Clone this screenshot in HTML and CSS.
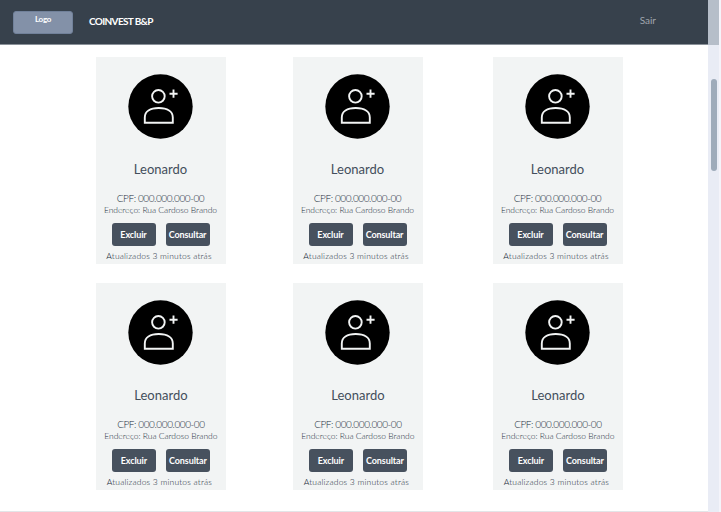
FILE: index.html
```
<!DOCTYPE html>
<html lang="pt-BR">
<head>
<meta charset="utf-8">
<title>COINVEST B&amp;P</title>
<link rel="stylesheet" href="styles.css">
</head>
<body>
<svg class="symbols" width="0" height="0" aria-hidden="true">
  <symbol id="avatar" viewBox="0 0 65 65">
    <circle cx="32.5" cy="32.5" r="32.2" fill="#000"/>
    <g fill="none" stroke="#f2f4f4" stroke-width="1.9">
      <circle cx="30.4" cy="22.3" r="6.3"/>
      <path d="M16.8 48.8V43.5C16.8 37.5 22 34 30.7 34S44.8 37.5 44.8 43.5V48.8Z"/>
      <path d="M41.5 19.7H49.6M45.5 15.6V23.8"/>
    </g>
  </symbol>
</svg>
<header class="topbar">
  <div class="logo">Logo</div>
  <div class="brand">COINVEST B&amp;P</div>
  <div class="logout">Sair</div>
</header>
<main class="content">
  <section class="row">
    <article class="card"><svg class="avatar"><use href="#avatar"/></svg><h2>Leonardo</h2><p class="cpf">CPF: 000.000.000-00</p><p class="address">Endereço: Rua Cardoso Brando</p><div class="actions"><button>Excluir</button><button>Consultar</button></div><p class="updated">Atualizados 3 minutos atrás</p></article>
    <article class="card"><svg class="avatar"><use href="#avatar"/></svg><h2>Leonardo</h2><p class="cpf">CPF: 000.000.000-00</p><p class="address">Endereço: Rua Cardoso Brando</p><div class="actions"><button>Excluir</button><button>Consultar</button></div><p class="updated">Atualizados 3 minutos atrás</p></article>
    <article class="card"><svg class="avatar"><use href="#avatar"/></svg><h2>Leonardo</h2><p class="cpf">CPF: 000.000.000-00</p><p class="address">Endereço: Rua Cardoso Brando</p><div class="actions"><button>Excluir</button><button>Consultar</button></div><p class="updated">Atualizados 3 minutos atrás</p></article>
  </section>
  <section class="row row-second">
    <article class="card"><svg class="avatar"><use href="#avatar"/></svg><h2>Leonardo</h2><p class="cpf">CPF: 000.000.000-00</p><p class="address">Endereço: Rua Cardoso Brando</p><div class="actions"><button>Excluir</button><button>Consultar</button></div><p class="updated">Atualizados 3 minutos atrás</p></article>
    <article class="card"><svg class="avatar"><use href="#avatar"/></svg><h2>Leonardo</h2><p class="cpf">CPF: 000.000.000-00</p><p class="address">Endereço: Rua Cardoso Brando</p><div class="actions"><button>Excluir</button><button>Consultar</button></div><p class="updated">Atualizados 3 minutos atrás</p></article>
    <article class="card"><svg class="avatar"><use href="#avatar"/></svg><h2>Leonardo</h2><p class="cpf">CPF: 000.000.000-00</p><p class="address">Endereço: Rua Cardoso Brando</p><div class="actions"><button>Excluir</button><button>Consultar</button></div><p class="updated">Atualizados 3 minutos atrás</p></article>
  </section>
</main>
<div class="scrollbar"><div class="thumb"></div></div>
</body>
</html>
```
FILE: styles.css
```
* { box-sizing: border-box; }
body {
  margin: 0;
  height: 512px;
  overflow: hidden;
  background: #fff;
  border-bottom: 1px solid #e3e5e8;
  font-family: Lato, "Liberation Sans", sans-serif;
  color: #434e5b;
}
.symbols { position: absolute; }
.topbar {
  display: flex;
  align-items: flex-start;
  height: 45px;
  padding: 11px 65px 0 13px;
  background: #37414c;
  border-bottom: 1px solid #8a9199;
  color: #fff;
}
.logo {
  width: 60px;
  height: 23px;
  border: 1px solid #71819a;
  border-radius: 3px;
  background: #8391a8;
  font-size: 8px;
  font-weight: 700;
  line-height: 15px;
  letter-spacing: -0.3px;
  text-align: center;
}
.brand {
  margin-left: 16px;
  font-size: 10px;
  font-weight: 700;
  line-height: 21px;
  letter-spacing: -0.65px;
}
.logout {
  margin-left: auto;
  font-size: 10px;
  line-height: 18px;
  color: #a0a6ae;
}
.content { padding: 12px 0 0 95.5px; }
.row {
  display: grid;
  grid-template-columns: 130px 130px 130px;
  column-gap: 67px;
}
.row .card:last-child { margin-left: 3px; margin-right: -3px; }
.row-second { margin: 19px 0 0 0.4px; }
.card {
  display: flex;
  flex-direction: column;
  align-items: center;
  height: 207px;
  padding-top: 17px;
  background: #f2f4f4;
  white-space: nowrap;
}
.avatar { width: 65px; height: 65px; flex: none; }
h2 {
  margin: 21px 0 0;
  font-size: 13px;
  font-weight: 400;
  line-height: 19px;
}
p { margin: 0; font-weight: 300; color: #202b39; }
.cpf { margin-top: 13px; font-size: 10px; line-height: 13px; letter-spacing: -0.42px; }
.address { font-size: 8.5px; line-height: 10px; letter-spacing: -0.03px; }
.actions { display: flex; gap: 10px; margin-top: 8px; }
button {
  width: 44px;
  height: 23px;
  padding: 0;
  border: 0;
  border-radius: 3px;
  background: #47515e;
  color: #fff;
  font: 700 9px/23px Lato, "Liberation Sans", sans-serif;
  letter-spacing: -0.1px;
}
.updated { margin: 5px 3px 0 0; font-size: 8.5px; line-height: 11px; letter-spacing: 0.18px; }
.scrollbar {
  position: absolute;
  top: 0;
  right: 0;
  width: 13px;
  height: 512px;
  padding: 79px 0 0 3px;
  border-right: 2px solid #f4f4fa;
  background: linear-gradient(#b6bec9 0 45px, #e9ecf5 45px);
}
.thumb { width: 6px; height: 92px; border-radius: 3px; background: #9eabba; }
```
